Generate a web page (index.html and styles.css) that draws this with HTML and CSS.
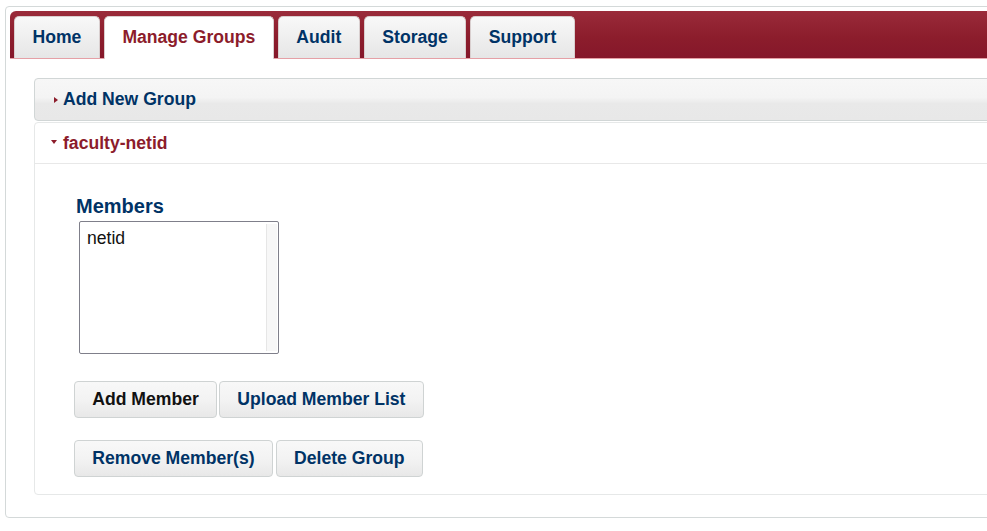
FILE: index.html
```html
<!DOCTYPE html>
<html>
<head>
<meta charset="utf-8">
<title>Manage Groups</title>
<link rel="stylesheet" href="styles.css">
</head>
<body>
<div class="page">
  <div class="tabbar">
    <a class="tab">Home</a>
    <a class="tab active">Manage Groups</a>
    <a class="tab">Audit</a>
    <a class="tab">Storage</a>
    <a class="tab">Support</a>
  </div>
  <div class="content">
    <div class="panel closed">
      <div class="panel-head"><span class="tri tri-right"></span>Add New Group</div>
    </div>
    <div class="panel open">
      <div class="panel-head open-head"><span class="tri tri-down"></span>faculty-netid</div>
      <div class="panel-body">
        <div class="members-label">Members</div>
        <div class="member-list">
          <div class="member-items">
            <div class="member">netid</div>
          </div>
          <div class="track"></div>
        </div>
        <div class="btn-row row1">
          <button class="btn btn-black">Add Member</button>
          <button class="btn">Upload Member List</button>
        </div>
        <div class="btn-row row2">
          <button class="btn">Remove Member(s)</button>
          <button class="btn">Delete Group</button>
        </div>
      </div>
    </div>
  </div>
</div>
</body>
</html>
```
FILE: styles.css
```css
html, body {
  margin: 0;
  padding: 0;
  overflow: hidden;
  background: #ffffff;
  font-family: "Liberation Sans", Arial, Helvetica, sans-serif;
}

.page {
  margin: 6px 0 0 5px;
  width: 1100px;
  border: 1px solid #d4d9d9;
  border-radius: 4px;
  padding: 4px;
  box-sizing: border-box;
}

.tabbar {
  display: flex;
  gap: 4px;
  padding: 5px 0 0 4px;
  height: 42px;
  box-sizing: content-box;
  background: linear-gradient(#9a2b3a 0%, #8c1d2c 55%, #85172a 100%);
  border-radius: 6px 0 0 0;
  border-bottom: 1px solid #e5a0a6;
}

.tab {
  display: block;
  height: 42px;
  box-sizing: border-box;
  padding: 0 17.5px;
  line-height: 40px;
  font-size: 17.6px;
  font-weight: bold;
  color: #003366;
  background: linear-gradient(#f8f8f8 0%, #efefef 50%, #e6e6e6 100%);
  border: 1px solid #d9cfcf;
  border-bottom: none;
  border-radius: 5px 5px 0 0;
  white-space: nowrap;
}

.tab.active {
  background: #ffffff;
  color: #8c1c2b;
  height: 43px;
  margin-bottom: -1px;
}

.content {
  padding: 19px 0 18px 24px;
}

.panel {
  border-radius: 4px;
  box-sizing: border-box;
}

.panel.closed {
  border: 1px solid #d1d6d6;
  background: linear-gradient(#f7f7f7 0%, #f4f4f4 45%, #e9e9e9 60%, #e8e8e8 100%);
}

.panel.open {
  margin-top: 1px;
  border: 1px solid #e6e8e8;
}

.panel-head {
  display: flex;
  align-items: center;
  height: 41px;
  padding-left: 19px;
  font-size: 17.6px;
  font-weight: bold;
  color: #003366;
  white-space: nowrap;
}

.open-head {
  height: 40px;
  padding-left: 16px;
  color: #8c1c2b;
  border-bottom: 1px solid #e8e8e8;
}

.tri {
  display: inline-block;
  width: 0;
  height: 0;
}

.tri-right {
  border-top: 3.5px solid transparent;
  border-bottom: 3.5px solid transparent;
  border-left: 4px solid #8c1c2b;
  margin-right: 5px;
}

.tri-down {
  border-left: 3.5px solid transparent;
  border-right: 3.5px solid transparent;
  border-top: 4px solid #8c1c2b;
  margin-right: 6px;
  margin-top: -3px;
}

.panel-body {
  padding: 31px 0 17px 39px;
}

.members-label {
  margin-left: 2px;
  font-size: 20px;
  line-height: 23px;
  font-weight: bold;
  color: #003366;
}

.member-list {
  display: flex;
  margin: 3px 0 0 5px;
  width: 200px;
  height: 133px;
  box-sizing: border-box;
  border: 1px solid #7f7f8a;
  border-radius: 2px;
  background: #ffffff;
}

.member-items {
  flex: 1;
  padding: 6px 0 0 7px;
}

.member {
  font-size: 17.6px;
  line-height: 20px;
  color: #111111;
}

.track {
  width: 10px;
  margin: 2px 1px 2px 0;
  background: #f7f7f7;
  border-left: 1px solid #e6e6e6;
}

.btn-row {
  display: flex;
  gap: 2px;
}

.row1 {
  margin-top: 27px;
}

.row2 {
  margin-top: 22px;
  gap: 3px;
}

.btn {
  height: 37px;
  padding: 0 17.25px;
  font-family: "Liberation Sans", Arial, Helvetica, sans-serif;
  font-size: 17.6px;
  font-weight: bold;
  color: #003366;
  background: linear-gradient(#f8f8f8 0%, #f3f3f3 50%, #e8e8e8 100%);
  border: 1px solid #cfd3d3;
  border-radius: 4px;
  white-space: nowrap;
}

.btn-black {
  color: #111111;
}
```
